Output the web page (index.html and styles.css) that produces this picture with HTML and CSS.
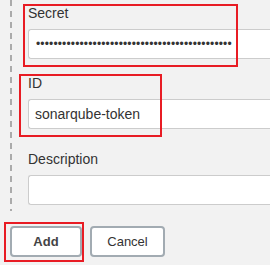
FILE: index.html
```html
<!DOCTYPE html>
<html>
<head>
<meta charset="utf-8">
<link rel="stylesheet" href="styles.css">
</head>
<body>
<div class="page">
  <div class="section">
    <div class="rail"></div>
    <div class="form">
      <div class="field field-secret">
        <label class="label">Secret</label>
        <input class="input input-secret" type="password" value="aaaaaaaaaaaaaaaaaaaaaaaaaaaaaaaaaaaaaaaaaaaaa">
      </div>
      <div class="field field-id">
        <label class="label">ID</label>
        <input class="input" type="text" value="sonarqube-token">
      </div>
      <div class="field field-desc">
        <label class="label">Description</label>
        <input class="input" type="text" value="">
      </div>
    </div>
  </div>
  <div class="buttons">
    <button class="btn btn-add">Add</button>
    <button class="btn btn-cancel">Cancel</button>
  </div>
  <div class="mark mark-secret"></div>
  <div class="mark mark-id"></div>
  <div class="mark mark-add"></div>
</div>
</body>
</html>
```
FILE: styles.css
```css
html, body {
  margin: 0;
  padding: 0;
  width: 270px;
  height: 265px;
  overflow: hidden;
  background: #f2f2f2;
}
body {
  font-family: "Liberation Sans", Arial, sans-serif;
  color: #333;
}
.page {
  position: relative;
  display: flex;
  flex-direction: column;
}
.section {
  display: flex;
}
.rail {
  width: 2px;
  margin-left: 10px;
  background: repeating-linear-gradient(to bottom, #ababab 0 6px, transparent 6px 11px);
}
.form {
  margin-left: 16px;
  padding-top: 5px;
  padding-bottom: 6px;
  display: flex;
  flex-direction: column;
}
.field {
  display: flex;
  flex-direction: column;
}
.field-id { margin-top: 16px; }
.field-desc { margin-top: 22px; }
.label {
  font-size: 14px;
  line-height: 17px;
  color: #333;
  margin-bottom: 7px;
}
.input {
  box-sizing: border-box;
  width: 242px;
  height: 30px;
  margin: 0;
  padding: 0 6px;
  border: 1px solid #cccccc;
  border-right: none;
  border-radius: 3px 0 0 3px;
  background: #fff;
  font-family: "Liberation Sans", Arial, sans-serif;
  font-size: 14px;
  color: #333;
  outline: none;
}
.input-secret {
  padding-left: 7px;
  font-size: 12px;
  letter-spacing: 0.15px;
  color: #333;
}
.buttons {
  display: flex;
  gap: 8px;
  padding-left: 10px;
  margin-top: 15px;
}
.btn {
  box-sizing: border-box;
  height: 31px;
  border: 2px solid #a2abb2;
  border-radius: 4px;
  background: #fff;
  font-family: "Liberation Sans", Arial, sans-serif;
  font-size: 13px;
  color: #333;
  padding: 0;
}
.btn-add { width: 72px; font-weight: bold; color: #444; }
.btn-cancel { width: 75px; }
.mark {
  position: absolute;
  box-sizing: border-box;
  border: 2px solid #e81c24;
}
.mark-secret { left: 23px; top: 4px; width: 215px; height: 63px; }
.mark-id { left: 19px; top: 74px; width: 143px; height: 63px; }
.mark-add { left: 4px; top: 222px; width: 80px; height: 40px; }
```
